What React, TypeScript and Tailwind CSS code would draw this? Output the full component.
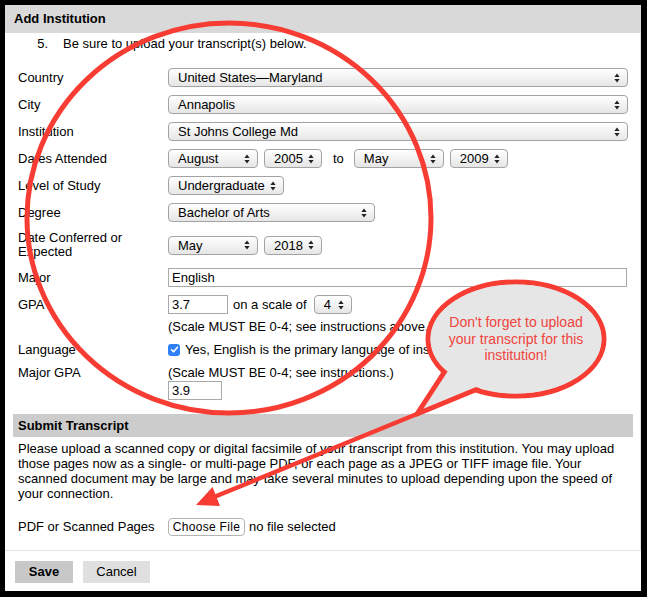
import type { ReactNode } from "react";

function Arrows() {
  return (
    <svg width="6" height="10" viewBox="0 0 6 10" className="shrink-0">
      <path d="M3 0.5 L5.6 4 L0.4 4 Z" fill="#222" />
      <path d="M3 9.5 L5.6 6 L0.4 6 Z" fill="#222" />
    </svg>
  );
}

function Sel({ className, children }: { className: string; children: ReactNode }) {
  return (
    <div
      className={`flex h-[19px] items-center justify-between rounded-[4px] border border-[#a3a3a3] bg-gradient-to-b from-white to-[#e6e6e6] pl-[9px] pr-[7px] leading-none ${className}`}
    >
      <span>{children}</span>
      <Arrows />
    </div>
  );
}

function Field({ className, children }: { className: string; children: ReactNode }) {
  return (
    <div className={`flex h-[19px] items-center border border-[#a9a9a9] bg-white pl-[3px] leading-none ${className}`}>
      {children}
    </div>
  );
}

function Row({ label, h, children }: { label: ReactNode; h: string; children?: ReactNode }) {
  return (
    <div className={`flex items-center ${h}`}>
      <div className="w-[150px] shrink-0 leading-[14px]">{label}</div>
      <div className="flex items-center">{children}</div>
    </div>
  );
}

export default function App() {
  return (
    <div className="relative h-[597px] w-[647px] overflow-hidden bg-black pl-[5px] pt-[5px] font-['Liberation_Sans',Arial,sans-serif] text-[13px] text-black">
      <div className="flex h-[586px] w-[636px] flex-col bg-white">
        <div className="flex h-[28px] shrink-0 items-center bg-[#d9d9d9] pl-[9px] font-bold">Add Institution</div>

        <div className="h-[517px] shrink-0 overflow-hidden border-r border-[#e3e3e3] pl-[13px] pt-[3px]">
          <div className="flex h-[15px] items-center leading-[15px]">
            <span className="w-[30px] text-right">5.</span>
            <span className="ml-[15px]">Be sure to upload your transcript(s) below.</span>
          </div>

          <div className="mt-[13px]">
            <Row label="Country" h="h-[27px]">
              <Sel className="w-[460px]">United States—Maryland</Sel>
            </Row>
            <Row label="City" h="h-[27px]">
              <Sel className="w-[460px]">Annapolis</Sel>
            </Row>
            <Row label="Institution" h="h-[27px]">
              <Sel className="w-[460px]">St Johns College Md</Sel>
            </Row>
            <Row label="Dates Attended" h="h-[27px]">
              <Sel className="w-[90px]">August</Sel>
              <Sel className="ml-[6px] w-[58px]">2005</Sel>
              <span className="ml-[11px] mr-[10px]">to</span>
              <Sel className="w-[90px]">May</Sel>
              <Sel className="ml-[6px] w-[58px]">2009</Sel>
            </Row>
            <Row label="Level of Study" h="h-[27px]">
              <Sel className="w-[116px]">Undergraduate</Sel>
            </Row>
            <Row label="Degree" h="h-[27px]">
              <Sel className="w-[207px]">Bachelor of Arts</Sel>
            </Row>
            <Row label="Date Conferred or Expected" h="h-[38px]">
              <Sel className="w-[90px]">May</Sel>
              <Sel className="ml-[6px] w-[58px]">2018</Sel>
            </Row>
            <Row label="Major" h="h-[27px]">
              <Field className="w-[459px]">English</Field>
            </Row>
            <Row label="GPA" h="h-[27px]">
              <Field className="w-[60px]">3.7</Field>
              <span className="ml-[5px] mr-[7px]">on a scale of</span>
              <Sel className="w-[38px]">4</Sel>
            </Row>
          </div>
          <div className="ml-[150px] mt-[1px] leading-[15px]">(Scale MUST BE 0-4; see instructions above.)</div>

          <div className="mt-[8px] flex h-[15px] items-center leading-[15px]">
            <span className="w-[150px]">Language</span>
            <span className="flex h-[12px] w-[12px] items-center justify-center rounded-[3px] bg-[#2f7ff7]">
              <svg width="9" height="9" viewBox="0 0 9 9">
                <path d="M1.6 4.7 L3.6 6.7 L7.4 2.3" fill="none" stroke="#fff" strokeWidth="1.6" strokeLinecap="round" strokeLinejoin="round" />
              </svg>
            </span>
            <span className="ml-[5px]">Yes, English is the primary language of instruction.</span>
          </div>

          <div className="mt-[8px] flex leading-[15px]">
            <span className="w-[150px]">Major GPA</span>
            <div>
              <div>(Scale MUST BE 0-4; see instructions.)</div>
              <Field className="mt-[1px] w-[54px]">3.9</Field>
            </div>
          </div>

          <div className="-ml-[5px] mt-[14px] flex h-[23px] w-[620px] items-center bg-[#cccccc] pl-[5px] font-bold">Submit Transcript</div>
          <p className="mt-[4px] whitespace-nowrap leading-[15px]">
            Please upload a scanned copy or digital facsimile of your transcript from this institution. You may upload
            <br />
            those pages now as a single- or multi-page PDF, or each page as a JPEG or TIFF image file. Your
            <br />
            scanned document may be large and may take several minutes to upload depending upon the speed of
            <br />
            your connection.
          </p>

          <div className="mt-[16px] flex h-[20px] items-center">
            <span className="w-[150px]">PDF or Scanned Pages</span>
            <span className="flex h-[18px] w-[77px] items-center justify-center rounded-[4px] border border-[#b3b3b3] bg-white text-[12px] tracking-[0.3px]">
              Choose File
            </span>
            <span className="ml-[4px]">no file selected</span>
          </div>
        </div>

        <div className="flex flex-1 items-start gap-[10px] border-t border-[#e3e3e3] pl-[10px] pt-[10px]">
          <div className="flex h-[22px] w-[58px] items-center justify-center bg-[#c8c8c8] font-bold">Save</div>
          <div className="flex h-[22px] w-[67px] items-center justify-center bg-[#dfdfdf]">Cancel</div>
        </div>
      </div>

      {/* red annotation layer */}
      <svg className="pointer-events-none absolute left-0 top-0" width="647" height="597" viewBox="0 0 647 597">
        <ellipse cx="229" cy="218" rx="202" ry="195" fill="none" stroke="#f73d33" strokeWidth="5" />
        <ellipse cx="516" cy="339" rx="88" ry="57" fill="#e6e6e6" stroke="#f73d33" strokeWidth="5" />
        <path d="M447 368 L417 414 L480 388" fill="#e6e6e6" stroke="#f73d33" strokeWidth="5" strokeLinejoin="round" />
        <ellipse cx="516" cy="339" rx="85.5" ry="54.5" fill="#e6e6e6" />
        <path d="M417 414 L214 497" stroke="#f73d33" strokeWidth="4.5" strokeLinecap="round" />
        <path d="M196 505 L220 506 L212.5 487 Z" fill="#f73d33" />
      </svg>
      <div className="absolute left-[427px] top-[314px] w-[178px] text-center text-[14px] leading-[16.5px] text-[#f0443c]">
        Don't forget to upload
        <br />
        your transcript for this
        <br />
        institution!
      </div>
    </div>
  );
}
